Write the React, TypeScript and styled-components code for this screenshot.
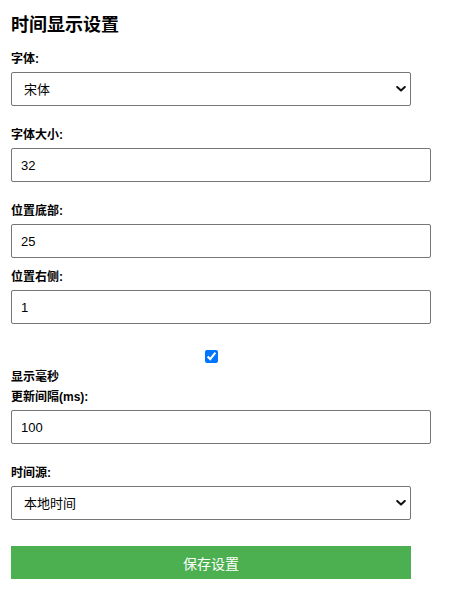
import React from "react";
import styled, { createGlobalStyle } from "styled-components";

const Global = createGlobalStyle`
  html, body { margin: 0; padding: 0; background: #ffffff; }
  body { font-family: "Liberation Sans", "Noto Sans CJK SC", sans-serif; color: #000; }
  * { box-sizing: border-box; }
`;

const Page = styled.div`
  padding: 14px 11px 20px;
  display: flex;
  flex-direction: column;
`;

const Title = styled.h2`
  margin: 0;
  font-size: 18px;
  line-height: 22px;
  font-weight: 700;
`;

const Field = styled.div<{ $top: number }>`
  display: flex;
  flex-direction: column;
  align-items: flex-start;
  margin-top: ${(p) => p.$top}px;
`;

const Label = styled.label<{ $mb?: number }>`
  display: block;
  font-size: 12px;
  line-height: 16px;
  font-weight: 700;
  margin-bottom: ${(p) => (p.$mb ?? 5)}px;
`;

const TextInput = styled.input`
  width: 420px;
  height: 34px;
  padding: 0 9px;
  border: 1px solid #767676;
  border-radius: 2px;
  font-family: "Liberation Sans", "Noto Sans CJK SC", sans-serif;
  font-size: 13px;
  color: #000;
  background: #fff;
  outline: none;
`;

const SelectWrap = styled.div<{ $h: number }>`
  position: relative;
  width: 400px;
  height: ${(p) => p.$h}px;
`;

const Select = styled.select`
  appearance: none;
  -webkit-appearance: none;
  width: 100%;
  height: 100%;
  padding: 0 30px 0 12px;
  border: 1px solid #767676;
  border-radius: 2px;
  font-family: "Liberation Sans", "Noto Sans CJK SC", sans-serif;
  font-size: 13px;
  color: #000;
  background: #fff;
  outline: none;
`;

const Chevron = styled.svg`
  position: absolute;
  right: 5px;
  top: 50%;
  width: 10px;
  height: 6px;
  margin-top: -3px;
  pointer-events: none;
`;

const CheckRow = styled.div`
  width: 400px;
  display: flex;
  justify-content: center;
  margin-top: 26px;
`;

const Check = styled.input`
  width: 13px;
  height: 13px;
  margin: 0;
  accent-color: #0075ff;
`;

const SaveButton = styled.button`
  margin-top: 26px;
  width: 400px;
  height: 33px;
  border: none;
  border-radius: 0;
  background: #4caf50;
  color: #fff;
  font-family: "Liberation Sans", "Noto Sans CJK SC", sans-serif;
  font-size: 14px;
  cursor: pointer;
`;

const ChevronIcon = () => (
  <Chevron viewBox="0 0 10 6">
    <path d="M1.2 1 L5 4.6 L8.8 1" fill="none" stroke="#111" strokeWidth="2" strokeLinecap="round" strokeLinejoin="round" />
  </Chevron>
);

export default function App() {
  return (
    <>
      <Global />
      <Page>
        <Title>时间显示设置</Title>
        <Field $top={15}>
          <Label>字体:</Label>
          <SelectWrap $h={34}>
            <Select defaultValue="宋体">
              <option>宋体</option>
              <option>黑体</option>
              <option>微软雅黑</option>
            </Select>
            <ChevronIcon />
          </SelectWrap>
        </Field>
        <Field $top={21}>
          <Label>字体大小:</Label>
          <TextInput type="text" defaultValue="32" />
        </Field>
        <Field $top={21}>
          <Label>位置底部:</Label>
          <TextInput type="text" defaultValue="25" />
        </Field>
        <Field $top={11}>
          <Label>位置右侧:</Label>
          <TextInput type="text" defaultValue="1" />
        </Field>
        <CheckRow>
          <Check type="checkbox" defaultChecked />
        </CheckRow>
        <Field $top={6}>
          <Label $mb={4}>显示毫秒</Label>
          <Label>更新间隔(ms):</Label>
          <TextInput type="text" defaultValue="100" />
        </Field>
        <Field $top={21}>
          <Label>时间源:</Label>
          <SelectWrap $h={34}>
            <Select defaultValue="本地时间">
              <option>本地时间</option>
              <option>网络时间</option>
            </Select>
            <ChevronIcon />
          </SelectWrap>
        </Field>
        <SaveButton>保存设置</SaveButton>
      </Page>
    </>
  );
}
